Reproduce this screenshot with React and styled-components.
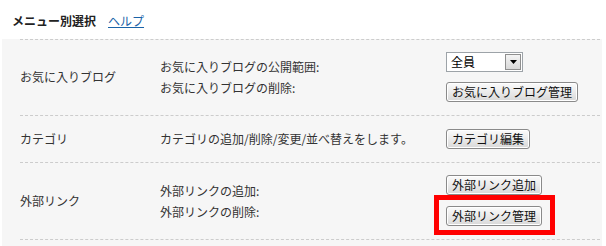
import React from "react";
import styled, { createGlobalStyle } from "styled-components";

const GlobalStyle = createGlobalStyle`
  html, body { margin: 0; padding: 0; background: #ffffff; }
  body {
    font-family: "Noto Sans CJK JP", "Noto Sans", sans-serif;
    font-size: 12px;
    color: #333333;
  }
`;

const Page = styled.div`
  width: 606px;
  height: 246px;
  overflow: hidden;
`;

const Header = styled.div`
  display: flex;
  align-items: center;
  gap: 12px;
  height: 39px;
  padding: 2px 0 0 12px;
  box-sizing: border-box;
`;

const Title = styled.h2`
  margin: 0;
  font-size: 12px;
  font-weight: bold;
  color: #222222;
  line-height: 1;
`;

const HelpLink = styled.a`
  color: #1a63a8;
  text-decoration: underline;
  font-size: 12px;
  line-height: 1;
`;

const Panel = styled.div`
  margin-left: 2px;
  width: 600px;
  background: #f6f6f6;
  padding: 0 2px 10px 18px;
  box-sizing: border-box;
`;

const Row = styled.div`
  display: grid;
  grid-template-columns: 140px 286px 1fr;
  align-items: center;
  border-top: 1px dashed #cccccc;
  padding: 12px 0 13px;
  min-height: ${(p) => p.$minHeight || 0}px;
  box-sizing: border-box;
  &:last-child {
    border-bottom: 1px dashed #cccccc;
  }
`;

const Label = styled.div`
  line-height: 16px;
`;

const Desc = styled.div`
  display: flex;
  flex-direction: column;
  line-height: 21px;
`;

const Controls = styled.div`
  display: flex;
  flex-direction: column;
  align-items: flex-start;
  gap: ${(p) => p.$gap || 10}px;
`;

const Button = styled.button`
  height: 20px;
  padding: 0 5px;
  border: 1px solid #8a8a8a;
  border-radius: 3px;
  background: linear-gradient(#fbfbfb, #e9e9e9 55%, #d8d8d8);
  font-family: "Noto Sans CJK JP", "Noto Sans", sans-serif;
  font-size: 12px;
  line-height: 18px;
  color: #111111;
  box-shadow: inset 0 0 0 1px #ffffff;
  cursor: pointer;
`;

const Highlight = styled.span`
  position: relative;
  display: inline-block;
  line-height: 0;
`;

const RedFrame = styled.span`
  position: absolute;
  top: -11px;
  left: -12px;
  right: -13px;
  bottom: -9px;
  border: 5px solid #ff0000;
  pointer-events: none;
`;

const Select = styled.div`
  display: flex;
  width: 77px;
  height: 20px;
  box-sizing: border-box;
  border: 1px solid #9da3a8;
  background: #ffffff;
`;

const SelectValue = styled.span`
  flex: 1;
  padding-left: 4px;
  line-height: 18px;
  color: #000000;
`;

const SelectArrow = styled.span`
  width: 16px;
  margin: 1px;
  box-sizing: border-box;
  border: 1px solid #8f8f8f;
  background: linear-gradient(#f4f4f4, #d9d9d9);
  display: flex;
  align-items: center;
  justify-content: center;
`;

export default function App() {
  return (
    <>
      <GlobalStyle />
      <Page>
        <Header>
          <Title>メニュー別選択</Title>
          <HelpLink href="#">ヘルプ</HelpLink>
        </Header>
        <Panel>
          <Row>
            <Label>お気に入りブログ</Label>
            <Desc>
              <span>お気に入りブログの公開範囲:</span>
              <span>お気に入りブログの削除:</span>
            </Desc>
            <Controls>
              <Select>
                <SelectValue>全員</SelectValue>
                <SelectArrow>
                  <svg width="7" height="4" viewBox="0 0 7 4">
                    <path d="M0 0h7L3.5 4z" fill="#000" />
                  </svg>
                </SelectArrow>
              </Select>
              <Button>お気に入りブログ管理</Button>
            </Controls>
          </Row>
          <Row $minHeight={47}>
            <Label>カテゴリ</Label>
            <Desc>
              <span>カテゴリの追加/削除/変更/並べ替えをします。</span>
            </Desc>
            <Controls>
              <Button>カテゴリ編集</Button>
            </Controls>
          </Row>
          <Row>
            <Label>外部リンク</Label>
            <Desc>
              <span>外部リンクの追加:</span>
              <span>外部リンクの削除:</span>
            </Desc>
            <Controls $gap={11}>
              <Button>外部リンク追加</Button>
              <Highlight>
                <Button>外部リンク管理</Button>
                <RedFrame />
              </Highlight>
            </Controls>
          </Row>
        </Panel>
      </Page>
    </>
  );
}
